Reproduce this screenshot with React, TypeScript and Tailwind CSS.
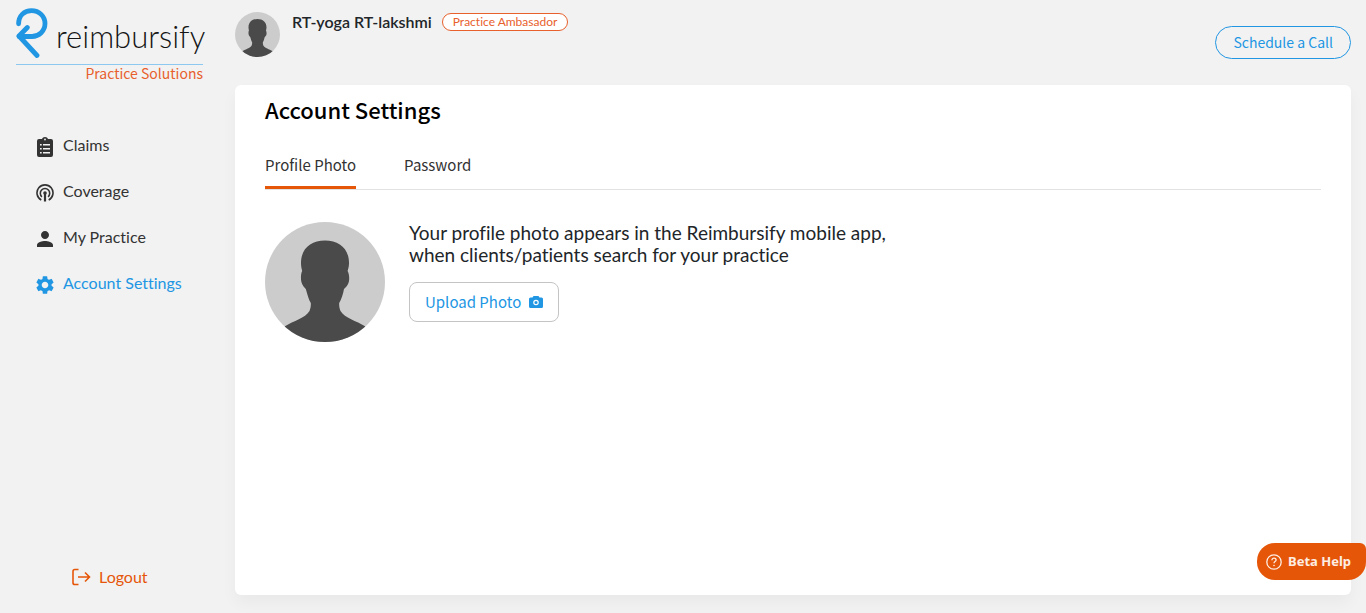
import React, { useState } from "react";
import { MdPerson, MdSettings } from "react-icons/md";

const cjk = "font-['Noto_Sans_CJK_SC','Noto_Sans',sans-serif]";

function Avatar({ className }: { className: string }) {
  return (
    <svg viewBox="0 0 120 120" className={className} role="img" aria-label="Profile">
      <defs>
        <clipPath id="avatar-disc">
          <circle cx="60" cy="60" r="60" />
        </clipPath>
      </defs>
      <circle cx="60" cy="60" r="60" fill="#cccccc" />
      <path
        clipPath="url(#avatar-disc)"
        fill="#4a4a4a"
        d="M60 18.500C46 18.500 36 26.500 36 41C36 44 36.500 46.500 37.200 49C35.800 51.500 35.600 57 36.400 60C37.200 63.500 39.500 65.500 40.800 67C42.500 73 44 78 45.800 81C46 84 45.500 86.500 44.500 89C40 96.500 29 98.500 19.500 104.500V120H100.500V104.500C91 98.500 80 96.500 75.500 89C74.500 86.500 74 84 74.200 81C76.500 77 78 72.500 79 67C80.500 65.500 83 63.500 83.800 60C84.600 57 84.200 51.500 82.600 49C83.400 46.500 84 44 84 41C84 26.500 74 18.500 60 18.500Z"
      />
    </svg>
  );
}

function ClaimsIcon() {
  return (
    <svg viewBox="0 0 16 20" className="h-5 w-4" aria-hidden="true">
      <path
        fill="currentColor"
        fillRule="evenodd"
        d="M2 2H5C5.400 .8 6.500 0 8 0S10.600 .8 11 2H14Q16 2 16 4V18Q16 20 14 20H2Q0 20 0 18V4Q0 2 2 2ZM8 1.600A.9 .9 0 1 0 8 3.400A.9 .9 0 1 0 8 1.600ZM3 7V8.500H4.700V7ZM6 7V8.500H13V7ZM3 11V12.500H4.700V11ZM6 11V12.500H13V11ZM3 15V16.500H4.700V15ZM6 15V16.500H13V15Z"
      />
    </svg>
  );
}

function CoverageIcon() {
  return (
    <svg viewBox="0 0 18 18" className="size-[18px]" fill="none" stroke="currentColor" strokeWidth="1.600" aria-hidden="true">
      <path d="M5.300 16A8 8 0 1 1 12.700 16" />
      <path d="M5.900 12.800A4.700 4.700 0 1 1 12.100 12.800" />
      <circle cx="9" cy="9" r="1.800" fill="currentColor" stroke="none" />
      <path d="M9 9V17.500" strokeWidth="2.200" />
    </svg>
  );
}

function Logo() {
  return (
    <a href="#home" className="mx-4 block" aria-label="reimbursify Practice Solutions">
      <span className="flex h-[57px] items-start gap-2 border-b border-[#8cc8f0]">
        <svg viewBox="0 0 32 51" className="h-[51px] w-8 shrink-0" fill="none" stroke="#2196e3" strokeWidth="4.800" strokeLinecap="round" strokeLinejoin="round" aria-hidden="true">
          <path d="M2.600 15.800C2.600 7.600 8.400 2.600 15.500 2.600C23.200 2.600 29 8.300 29 15.600C29 22.900 23.200 28.500 16 28.500H3" />
          <path d="M11.300 19.500L3 28L21 47.500" />
        </svg>
        <span className="mt-2 text-[31px] leading-10 font-light text-[#151515]">reimbursify</span>
      </span>
      <span className={`block text-right text-sm leading-4 text-[#e8602c] ${cjk}`}>Practice Solutions</span>
    </a>
  );
}

const navItems = [
  { label: "Claims", icon: <ClaimsIcon /> },
  { label: "Coverage", icon: <CoverageIcon /> },
  { label: "My Practice", icon: <MdPerson className="size-6" /> },
  { label: "Account Settings", icon: <MdSettings className="size-[22px]" />, active: true },
];

export default function App() {
  const [tab, setTab] = useState("Profile Photo");
  return (
    <div className="flex min-h-screen bg-[#f2f2f2] font-['Lato',sans-serif] text-[#212529] [font-variant-ligatures:none]">
      <aside className="flex w-[219px] shrink-0 flex-col pt-2 pb-6">
        <Logo />
        <nav aria-label="Main" className="mt-[54px] flex flex-col gap-[22px] pl-[33px]">
          {navItems.map((item) => (
            <a
              key={item.label}
              href="#page"
              className={item.active ? "flex h-6 items-center gap-1.5 text-[#2196e3]" : "flex h-6 items-center gap-1.5 text-[#333333]"}
            >
              <span className="flex w-6 justify-center">{item.icon}</span>
              <span className="pb-1 text-base leading-6">{item.label}</span>
            </a>
          ))}
        </nav>
        <button type="button" className="mt-auto ml-[72px] flex items-center gap-2 self-start text-base leading-6 text-[#e65609]">
          <svg viewBox="0 0 19 18" className="h-[18px] w-[19px]" fill="none" stroke="currentColor" strokeWidth="1.600" aria-hidden="true">
            <path d="M6.500 1.500H2.800Q1 1.500 1 3.300V14.700Q1 16.500 2.800 16.500H6.500M6 9H17.500M13 4.500L17.500 9L13 13.500" />
          </svg>
          Logout
        </button>
      </aside>

      <div className="flex min-w-0 grow flex-col pr-[15px] pb-[18px] pl-4">
        <header className="flex h-[85px] justify-between">
          <div className="flex pt-3">
            <Avatar className="size-[45px] shrink-0" />
            <div className="ml-3 flex h-5 items-center gap-2.5">
              <span className="text-base leading-5 font-semibold">RT-yoga RT-lakshmi</span>
              <span className="flex h-[18px] items-center rounded-full border border-[#e8602c] bg-white px-2.5 text-xs text-[#e8602c]">Practice Ambasador</span>
            </div>
          </div>
          <button type="button" className={`mt-[26px] h-[33px] rounded-full border border-[#2196e3] px-[17px] pb-0.5 text-sm leading-5 text-[#2196e3] ${cjk}`}>
            Schedule a Call
          </button>
        </header>

        <main className="grow rounded-md bg-white px-[30px] pt-2 shadow-[0_8px_16px_rgba(0,0,0,0.04)]">
          <h1 className={`text-[22px] leading-8 font-medium text-black ${cjk}`}>Account Settings</h1>
          <div role="tablist" className="mt-[26px] flex gap-12 border-b border-[#e2e2e2]">
            {["Profile Photo", "Password"].map((t) => (
              <button
                key={t}
                type="button"
                role="tab"
                aria-selected={tab === t}
                onClick={() => setTab(t)}
                className={`h-[38px] border-b-[3px] pb-2 text-[15px] leading-5 text-[#333333] ${cjk} ${tab === t ? "border-[#e65609]" : "border-transparent"}`}
              >
                {t}
              </button>
            ))}
          </div>
          <section className="mt-8 flex gap-6">
            <Avatar className="size-[120px] shrink-0" />
            <div>
              <p className="text-[19px] leading-[22px]">
                Your profile photo appears in the Reimbursify mobile app,
                <br />
                when clients/patients search for your practice
              </p>
              <button type="button" className={`mt-4 flex h-10 items-center gap-2 rounded-lg border border-[#c4c4c4] px-[15px] text-[15px] leading-5 text-[#2196e3] ${cjk}`}>
                Upload Photo
                <svg viewBox="0 0 14 12" className="h-3 w-3.5" aria-hidden="true">
                  <path fill="currentColor" d="M4.500 0H9.500L10.500 1.500H12.500Q14 1.500 14 3V10.500Q14 12 12.500 12H1.500Q0 12 0 10.500V3Q0 1.500 1.500 1.500H3.500Z" />
                  <circle cx="7" cy="6.500" r="2.200" fill="none" stroke="white" strokeWidth="1.200" />
                </svg>
              </button>
            </div>
          </section>
        </main>
      </div>

      <button type="button" className="fixed right-0 bottom-[33px] flex h-[37px] items-center gap-1.5 rounded-l-[18px] rounded-tr-md rounded-br-[18px] bg-[#e65609] pr-[15px] pl-[9px] font-['Noto_Sans',sans-serif] text-[13px] font-bold text-[#fdeee4]">
        <svg viewBox="0 0 16 16" className="size-4" fill="none" stroke="currentColor" strokeWidth="1.300" aria-hidden="true">
          <circle cx="8" cy="8" r="7.200" />
          <path d="M5.900 6.200C5.900 4.900 6.800 4.100 8 4.100S10.100 4.900 10.100 6.100C10.100 7.600 8 7.600 8 9.200" />
          <circle cx="8" cy="11.500" r=".8" fill="currentColor" stroke="none" />
        </svg>
        Beta Help
      </button>
    </div>
  );
}
